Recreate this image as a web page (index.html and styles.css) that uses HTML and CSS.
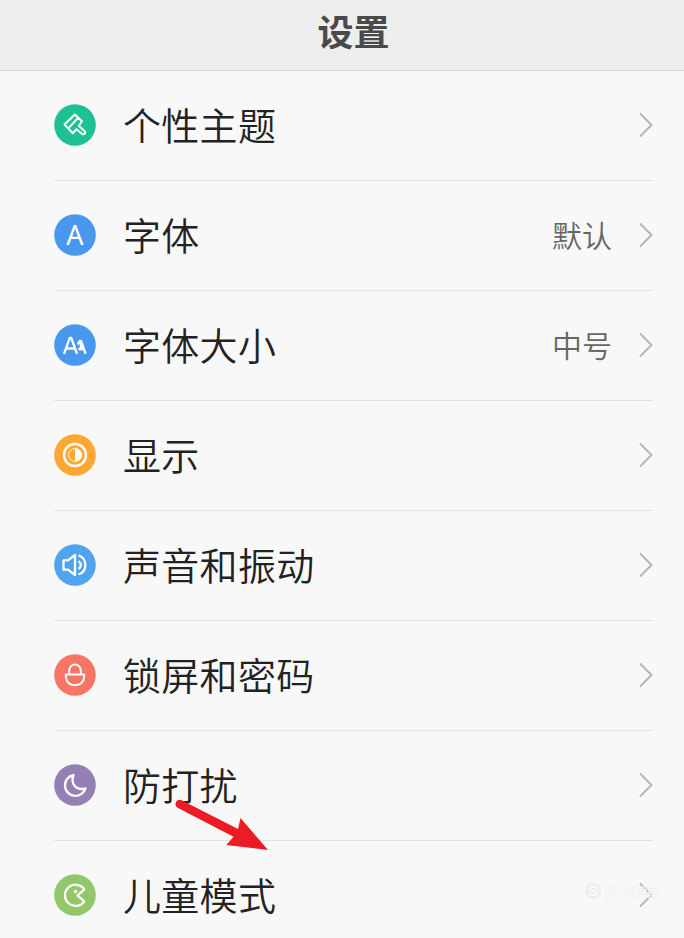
FILE: index.html
```html
<!DOCTYPE html>
<html lang="zh-CN">
<head>
  <meta charset="UTF-8" />
  <meta name="viewport" content="width=device-width, initial-scale=1.0" />
  <title>设置</title>
  <link rel="stylesheet" href="styles.css">
</head>
<body>
  <header class="header">
    <h1>设置</h1>
  </header>

  <main class="list">
    <a class="row">
      <svg class="icon" viewBox="0 0 42 42">
        <circle class="green" cx="21" cy="21" r="20.8" />
        <path class="brush" d="M10.5 20.5L20.8 10.5L28 17.2L24.8 21.8L31 27.4Q31.8 30.8 28.4 30.2L22.5 25.3L18.8 29.2Z M14.3 24.4L24 14" />
      </svg>
      <span class="label">个性主题</span>
      <svg class="chevron" viewBox="0 0 14 26"><path d="M1 1.5L12.5 13L1 24.5" /></svg>
    </a>

    <a class="row">
      <svg class="icon" viewBox="0 0 42 42">
        <circle class="blue" cx="21" cy="21" r="20.8" />
        <text x="21" y="31" font-size="27" text-anchor="middle">A</text>
      </svg>
      <span class="label">字体</span>
      <span class="value">默认</span>
      <svg class="chevron" viewBox="0 0 14 26"><path d="M1 1.5L12.5 13L1 24.5" /></svg>
    </a>

    <a class="row">
      <svg class="icon" viewBox="0 0 42 42">
        <circle class="blue" cx="21" cy="21" r="20.8" />
        <path d="M10 29.8L15.8 13.8H17.3L23 29.8M12.3 24.5H21" />
        <path d="M23.7 20.5L25.7 16.8H27L31.6 29.8M26.8 18V25.2H29.5M26.8 25.2H24.3" />
      </svg>
      <span class="label">字体大小</span>
      <span class="value">中号</span>
      <svg class="chevron" viewBox="0 0 14 26"><path d="M1 1.5L12.5 13L1 24.5" /></svg>
    </a>

    <a class="row">
      <svg class="icon" viewBox="0 0 42 42">
        <circle class="orange" cx="21" cy="21" r="20.8" />
        <circle class="ring" cx="21" cy="21" r="11" />
        <circle class="thin" cx="21" cy="21" r="6.4" />
        <path class="solid" d="M21 14.2A6.8 6.8 0 0 1 21 27.8Z" />
      </svg>
      <span class="label">显示</span>
      <svg class="chevron" viewBox="0 0 14 26"><path d="M1 1.5L12.5 13L1 24.5" /></svg>
    </a>

    <a class="row">
      <svg class="icon" viewBox="0 0 42 42">
        <circle class="sky" cx="21" cy="21" r="20.8" />
        <path d="M9.5 16.3H14L21 11V31L14 25.7H9.5Z" />
        <path d="M24.3 17.2A4.2 4.2 0 0 1 24.3 24.8M24.5 11.5A10 10 0 0 1 24.5 30.5" />
      </svg>
      <span class="label">声音和振动</span>
      <svg class="chevron" viewBox="0 0 14 26"><path d="M1 1.5L12.5 13L1 24.5" /></svg>
    </a>

    <a class="row">
      <svg class="icon" viewBox="0 0 42 42">
        <circle class="red" cx="21" cy="21" r="20.8" />
        <path class="lock" d="M11.8 20.5H30.2V22.5Q29.4 31 21 31.2Q12.6 31 11.8 22.5ZM15.2 20V16.5A5.8 5.9 0 0 1 26.8 16.5V20" />
      </svg>
      <span class="label">锁屏和密码</span>
      <svg class="chevron" viewBox="0 0 14 26"><path d="M1 1.5L12.5 13L1 24.5" /></svg>
    </a>

    <a class="row">
      <svg class="icon" viewBox="0 0 42 42">
        <circle class="purple" cx="21" cy="21" r="20.8" />
        <path d="M19.5 11A10.5 10.5 0 1 0 31.5 24.3Q24.5 26.5 20.7 22Q17 17.2 19.5 11Z" />
      </svg>
      <span class="label">防打扰</span>
      <svg class="chevron" viewBox="0 0 14 26"><path d="M1 1.5L12.5 13L1 24.5" /></svg>
    </a>

    <a class="row">
      <svg class="icon" viewBox="0 0 42 42">
        <circle class="lime" cx="21" cy="21" r="20.8" />
        <path d="M30.3 15.3A10.6 10.6 0 1 0 30.3 27.3L23.5 21.5Z" />
        <circle class="solid" cx="21.5" cy="17.5" r="1.7" />
      </svg>
      <span class="label">儿童模式</span>
      <svg class="chevron" viewBox="0 0 14 26"><path d="M1 1.5L12.5 13L1 24.5" /></svg>
    </a>
  </main>

  <svg class="arrow" viewBox="0 0 96 56">
    <path d="M8.7 2.2L65 31L67.5 20L95 52L53.3 47L60.5 38.8L5 10A4 4 0 0 1 8.7 2.2Z" />
  </svg>

  <div class="watermark">
    <div class="brand"><span class="logo">S</span>搜狗指南</div>
    <div class="site">zhinan.sogou.com</div>
  </div>
</body>
</html>
```
FILE: styles.css
```css
* {
  box-sizing: border-box;
  margin: 0;
  padding: 0;
}

body {
  position: relative;
  height: 938px;
  overflow: hidden;
  background: #f8f8f8;
  font-family: "Noto Sans CJK SC", sans-serif;
  color: #222;
}

.header {
  height: 71px;
  background: #eee;
  border-bottom: 1px solid #d9d9d9;
  text-align: center;
}

h1 {
  padding-left: 23px;
  font-size: 36px;
  line-height: 61px;
  font-weight: 700;
  color: #4a4a4a;
}

.list {
  padding: 0 31px 0 54px;
}

.row {
  display: flex;
  align-items: center;
  height: 110px;
  padding-bottom: 1px;
  border-bottom: 1px solid #e2e2e2;
}

.icon {
  width: 42px;
  height: 42px;
  margin-right: 27px;
  flex: none;
  fill: none;
  stroke: #fff;
  stroke-width: 2.3;
  stroke-linejoin: round;
}

.icon circle {
  stroke: none;
}

.icon text {
  font-family: "Noto Sans", sans-serif;
  fill: #fff;
  stroke: none;
}

.icon .solid {
  fill: #fff;
  stroke: none;
}

.icon .ring {
  stroke: #fff;
  stroke-width: 2.4;
}

.icon .thin {
  stroke: #fff;
  stroke-width: 0.9;
}

.icon .lock,
.icon .brush {
  stroke-width: 2;
}

.green { fill: #1fc094; }
.blue { fill: #4798ee; }
.orange { fill: #ffa732; }
.sky { fill: #50a3ed; }
.red { fill: #f77565; }
.purple { fill: #967fb5; }
.lime { fill: #92c76b; }

.label {
  flex: 1;
  padding-bottom: 2px;
  font-size: 38px;
  line-height: 56px;
  font-weight: 350;
  letter-spacing: 0.3px;
}

.value {
  margin-right: 27px;
  padding-bottom: 2px;
  font-size: 30px;
  line-height: 44px;
  font-weight: 350;
  color: #666;
}

.chevron {
  width: 14px;
  height: 26px;
  flex: none;
  fill: none;
  stroke: #b5b5b5;
  stroke-width: 2;
}

.arrow {
  position: absolute;
  left: 173px;
  top: 798px;
  width: 96px;
  height: 56px;
  fill: #ed1c24;
}

.watermark {
  position: absolute;
  left: 585px;
  top: 881px;
  width: 78px;
  color: #fcfcfc;
  text-shadow: 0 0 2px #e4e4e4;
}

.brand {
  display: flex;
  align-items: center;
  gap: 4px;
  font-size: 14px;
  line-height: 20px;
  white-space: nowrap;
}

.logo {
  width: 16px;
  height: 16px;
  border-radius: 50%;
  background: #efefef;
  font: bold 15px/16px "Liberation Sans", sans-serif;
  text-align: center;
}

.site {
  font: 9px/14px "Liberation Sans", sans-serif;
}
```
